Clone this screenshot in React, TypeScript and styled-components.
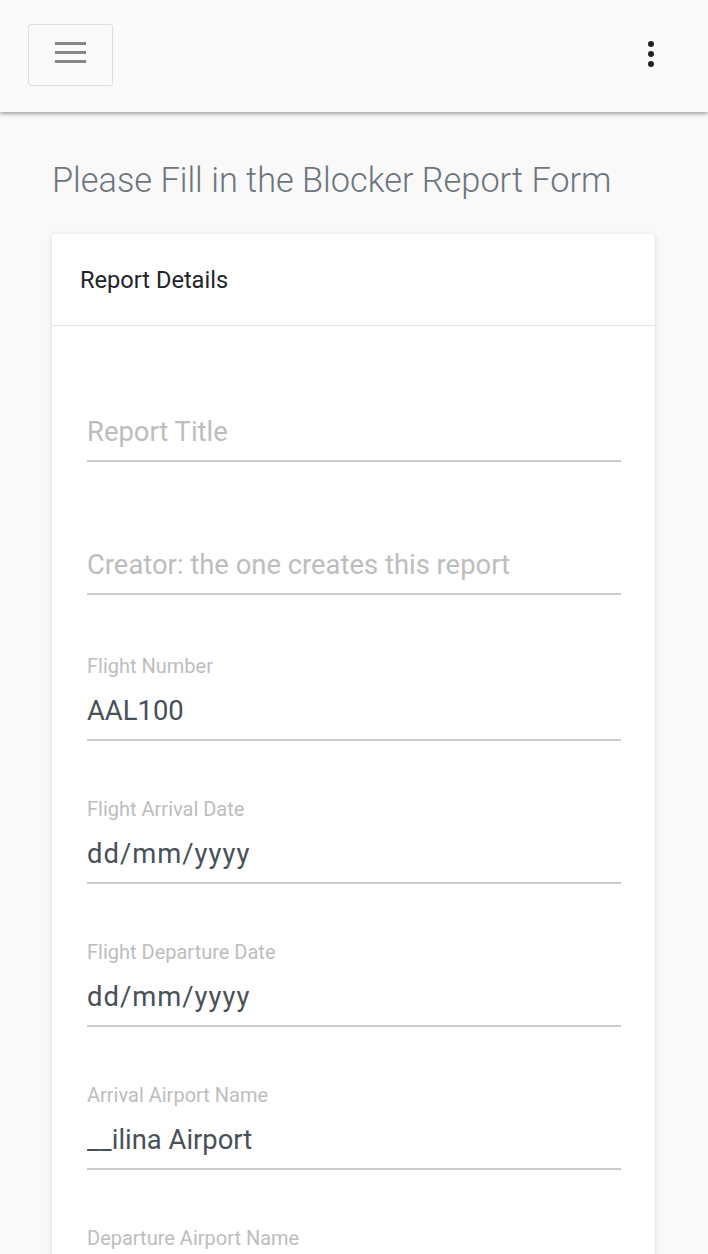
import styled, { createGlobalStyle } from "styled-components";

const GlobalStyle = createGlobalStyle`
  * {
    box-sizing: border-box;
  }
  body {
    margin: 0;
    background-color: #f9f9f9;
    font-family: Roboto, "Liberation Sans", sans-serif;
  }
`;

interface fieldProps {
  label?: string;
  placeholder?: string;
  value?: string;
  date?: boolean;
}

const fields: fieldProps[] = [
  { placeholder: "Report Title" },
  { placeholder: "Creator: the one creates this report" },
  { label: "Flight Number", value: "AAL100" },
  { label: "Flight Arrival Date", value: "dd/mm/yyyy", date: true },
  { label: "Flight Departure Date", value: "dd/mm/yyyy", date: true },
  { label: "Arrival Airport Name", value: "__ilina Airport" },
  { label: "Departure Airport Name", value: "" },
];

const Field = ({ label, placeholder, value, date }: fieldProps): JSX.Element => {
  return (
    <FieldGroup>
      <Label $empty={!label}>{label}</Label>
      <Input
        type="text"
        placeholder={placeholder}
        defaultValue={value}
        $date={date}
        readOnly
      />
    </FieldGroup>
  );
};

const App = (): JSX.Element => {
  return (
    <>
      <GlobalStyle />
      <TopBar>
        <MenuButton aria-label="menu">
          <span />
          <span />
          <span />
        </MenuButton>
        <MoreButton aria-label="more">
          <i />
          <i />
          <i />
        </MoreButton>
      </TopBar>
      <Main>
        <Title>Please Fill in the Blocker Report Form</Title>
        <Card>
          <CardHeader>Report Details</CardHeader>
          <CardBody>
            {fields.map((f, i) => (
              <Field key={i} {...f} />
            ))}
          </CardBody>
        </Card>
      </Main>
    </>
  );
};

const TopBar = styled.header`
  height: 112px;
  display: flex;
  align-items: center;
  justify-content: space-between;
  padding: 0 54px 2px 28px;
  background-color: #fafafa;
  box-shadow: 0 2px 4px rgba(0, 0, 0, 0.35);
  position: relative;
  z-index: 1;
`;

const MenuButton = styled.button`
  width: 85px;
  height: 62px;
  display: flex;
  flex-direction: column;
  align-items: center;
  justify-content: center;
  gap: 6px;
  padding: 0 0 6px;
  background: transparent;
  border: 1px solid #dedede;
  border-radius: 3px;

  span {
    display: block;
    width: 31px;
    height: 3px;
    background-color: #858585;
  }
`;

const MoreButton = styled.div`
  display: flex;
  flex-direction: column;
  align-items: center;
  gap: 4px;
  margin-bottom: 2px;

  i {
    display: block;
    width: 6px;
    height: 6px;
    border-radius: 50%;
    background-color: #212121;
  }
`;

const Main = styled.main`
  padding: 0 53px 0 52px;
`;

const Title = styled.h1`
  margin: 48px 0 34px;
  font-size: 34.3px;
  line-height: 40px;
  font-weight: 300;
  color: #6c757d;
  white-space: nowrap;
`;

const Card = styled.section`
  background-color: #ffffff;
  border-radius: 3px;
  box-shadow: 0 1px 5px rgba(0, 0, 0, 0.16);
`;

const CardHeader = styled.div`
  height: 92px;
  display: flex;
  align-items: center;
  padding: 0 28px;
  font-size: 23.6px;
  color: #212529;
  border-bottom: 1px solid #e3e3e3;
`;

const CardBody = styled.div`
  padding: 59px 34px 40px 35px;
  display: flex;
  flex-direction: column;
  gap: 56px;
`;

const FieldGroup = styled.div`
  display: flex;
  flex-direction: column;
  gap: 5px;

  &:nth-child(3) {
    margin-top: 3px;
  }
`;

const Label = styled.label<{ $empty?: boolean }>`
  height: ${(p) => (p.$empty ? "14px" : "24px")};
  font-size: 20px;
  line-height: 24px;
  color: #bdbdbd;
`;

const Input = styled.input<{ $date?: boolean }>`
  width: 100%;
  height: 58px;
  padding: 0;
  border: none;
  border-bottom: 2px solid #cccccc;
  background: transparent;
  font-family: Roboto, "Liberation Sans", sans-serif;
  font-size: 27.4px;
  letter-spacing: ${(p) => (p.$date ? "1px" : "0")};
  color: #495057;
  outline: none;

  &::placeholder {
    color: #bdbdbd;
  }
`;

export default App;
